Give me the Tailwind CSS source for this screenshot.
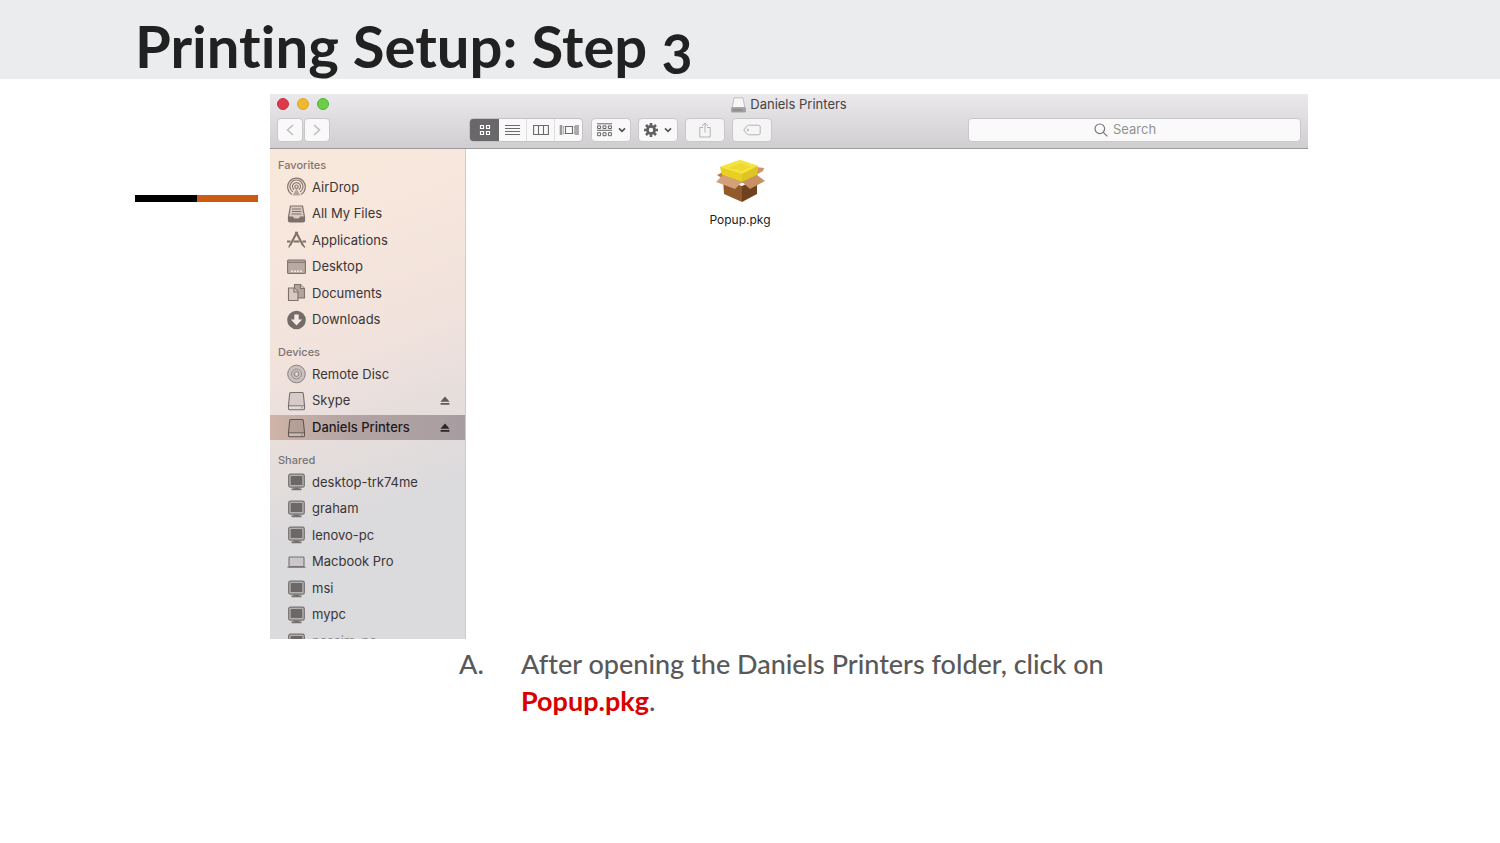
<!DOCTYPE html>
<html lang="en">
<head>
  <meta charset="UTF-8" />
  <meta name="viewport" content="width=device-width, initial-scale=1.0"/>
  <title>Printing Setup: Step 3</title>
  <script src="https://cdn.jsdelivr.net/npm/@tailwindcss/browser@4"></script>
</head>
<body class="bg-white font-[Lato,sans-serif] min-h-screen">
  <!-- Shared icons -->
  <svg class="hidden">
    <symbol id="pc" viewBox="0 0 18 18">
      <rect x="1.2" y="1.2" width="15.6" height="13" rx="1.8" fill="#b5b2b2" stroke="#747070" stroke-width="1.2"/>
      <rect x="3.2" y="3" width="11.6" height="9" fill="#6c6868"/>
      <path d="M6.5 14.500h5l.5 1h2v1.700H4v-1.700h2z" fill="#747070"/>
    </symbol>
    <symbol id="drive" viewBox="0 0 18 20">
      <path d="M3.4 1.500h11.200q1 0 1.200 1l1.200 11.500v3.500q0 1.300-1.300 1.300H2.300Q1 18.800 1 17.500V14L2.200 2.500q.2-1 1.200-1z" fill="#000" fill-opacity=".09" stroke="#000" stroke-opacity=".48" stroke-width="1.100"/>
      <path d="M1.500 15.500h15v2.200h-15z" fill="#fff" fill-opacity=".35"/>
      <path d="M1.300 14.800h15.400" stroke="#000" stroke-opacity=".4"/>
      <path d="M13.500 16.800h1.500" stroke="#000" stroke-opacity=".4"/>
    </symbol>
    <symbol id="eject" viewBox="0 0 10 10">
      <path d="M5 .5l4.600 5.300H.4zM.6 7h8.800v1.800H.6z" fill="currentColor"/>
    </symbol>
    <symbol id="down" viewBox="0 0 8 6">
      <path d="M1 1.300l3 3 3-3" fill="none" stroke="#555" stroke-width="1.700"/>
    </symbol>
  </svg>

  <header class="bg-[#ebeced] h-[79px] px-[9%] flex items-center">
    <h1 class="text-[58px] leading-[60px] font-bold [font-variant-ligatures:none] oldstyle-nums text-[#212121] pt-3">Printing Setup: Step 3</h1>
  </header>

  <main class="pl-[9%] pr-[12.8%] pt-[15px]">
    <div class="flex gap-3">
      <!-- Accent bar -->
      <div class="w-[123px] h-[7px] mt-[101px] flex shrink-0">
        <div class="flex-1 bg-black"></div>
        <div class="flex-1 bg-[#cc5a12]"></div>
      </div>

      <!-- Finder window -->
      <section class="flex-1 min-w-0 font-[Inter,sans-serif] text-[13px] text-[#3a3536]">
        <div class="bg-linear-to-b from-[#ebe9eb] to-[#d0ced0] border-b border-[#9b999b] px-[7px] pb-[6px]">
          <div class="h-[22px] grid grid-cols-3 items-center">
            <div class="flex gap-2 pb-[2px]">
              <button aria-label="Close" class="size-3 rounded-full bg-[#dc3a49] border border-[#c43542]"></button>
              <button aria-label="Minimize" class="size-3 rounded-full bg-[#ecb92f] border border-[#dba72e]"></button>
              <button aria-label="Zoom" class="size-3 rounded-full bg-[#6bcf46] border border-[#51b33c]"></button>
            </div>
            <div class="flex justify-center items-center gap-1 text-[#454346]">
              <svg class="w-[15px] h-4" viewBox="0 0 15 16">
                <path d="M3 .8h9l1.800 10H1.200z" fill="#f7f7f7" stroke="#b5b3b5" stroke-width=".8"/>
                <path d="M.7 10.800h13.600v4.200H.7z" fill="#a7a7a7" stroke="#8c8c8c" stroke-width=".7"/>
                <path d="M2 13h9.500" stroke="#777"/>
              </svg>
              <h2 class="whitespace-nowrap">Daniels Printers</h2>
            </div>
          </div>

          <div class="flex items-center h-6 mt-[2px]">
            <div class="flex gap-px">
              <button aria-label="Back" class="w-[26px] h-6 rounded bg-[#f9f9f9] border border-[#c9c7c9] flex items-center justify-center">
                <svg class="w-2 h-3" viewBox="0 0 8 12"><path d="M7 1L1.500 6 7 11" fill="none" stroke="#bdbdbd" stroke-width="1.500"/></svg>
              </button>
              <button aria-label="Forward" class="w-[26px] h-6 rounded bg-[#f9f9f9] border border-[#c9c7c9] flex items-center justify-center">
                <svg class="w-2 h-3" viewBox="0 0 8 12"><path d="M1 1l5.500 5L1 11" fill="none" stroke="#bdbdbd" stroke-width="1.500"/></svg>
              </button>
            </div>

            <div class="ml-[139px] w-[114px] h-6 rounded bg-[#f9f9f9] border border-[#c3c1c3] flex overflow-hidden">
              <button aria-label="Icon view" class="w-[29px] bg-[#68676a] flex items-center justify-center">
                <svg class="w-3 h-3" viewBox="0 0 12 12" fill="none" stroke="#fff" stroke-width="1.200"><path d="M1.500 1.500h3v3h-3zM7.500 1.500h3v3h-3zM1.500 7.500h3v3h-3zM7.500 7.500h3v3h-3z"/></svg>
              </button>
              <button aria-label="List view" class="flex-1 flex items-center justify-center">
                <svg class="w-[15px] h-3" viewBox="0 0 15 12" stroke="#6b6b6b" stroke-width="1.100"><path d="M0 1.500h15M0 4.500h15M0 7.500h15M0 10.500h15"/></svg>
              </button>
              <button aria-label="Column view" class="flex-1 flex items-center justify-center border-l border-[#dedede]">
                <svg class="w-4 h-3" viewBox="0 0 16 12" fill="none" stroke="#6b6b6b" stroke-width="1.100"><path d="M.6 1.500h14.800v9H.6zM5.500 1.500v9M10.500 1.500v9"/></svg>
              </button>
              <button aria-label="Cover flow view" class="flex-1 flex items-center justify-center border-l border-[#dedede]">
                <svg class="w-5 h-3" viewBox="0 0 20 12" fill="none" stroke="#6b6b6b" stroke-width="1.100"><path d="M6.500 2.500h7v7h-7zM4.500 2v1.500M4.500 8.500V10M15.500 2v1.500M15.500 8.500V10M17 1v10M19 1v10"/><path d="M2 1v10" stroke="#999" stroke-width="2.600"/><path d="M4.500 2v8M15.500 2v8" stroke="#aaa" stroke-width=".8"/></svg>
              </button>
            </div>

            <div class="flex gap-[7px] ml-2">
              <button aria-label="Arrange" class="w-10 h-6 rounded bg-[#f9f9f9] border border-[#c9c7c9] flex items-center justify-center gap-[6px]">
                <svg class="w-[15px] h-[14px]" viewBox="0 0 15 14" fill="none" stroke="#666"><path d="M0 .8h15M0 7.300h15M.6 2.900h3v2.600h-3zM6 2.900h3v2.600H6zM11.400 2.900h3v2.600h-3zM.6 9.700h3v3h-3zM6 9.700h3v3H6zM11.400 9.700h3v3h-3z"/></svg>
                <svg class="w-2 h-[6px]"><use href="#down"/></svg>
              </button>
              <button aria-label="Action" class="w-10 h-6 rounded bg-[#f9f9f9] border border-[#c9c7c9] flex items-center justify-center gap-[6px]">
                <svg class="w-[14px] h-[14px]" viewBox="0 0 14 14" fill="none" stroke="#5f5f5f"><circle cx="7" cy="7" r="3.600" stroke-width="2.800"/><path d="M7 0v2.500M7 11.500V14M0 7h2.500M11.500 7H14M2 2l1.900 1.900M10.100 10.100L12 12M12 2l-1.900 1.900M3.900 10.100L2 12" stroke-width="2.600"/></svg>
                <svg class="w-2 h-[6px]"><use href="#down"/></svg>
              </button>
              <button aria-label="Share" class="w-10 h-6 rounded bg-[#f6f5f6] border border-[#c9c7c9] flex items-center justify-center">
                <svg class="w-3 h-4" viewBox="0 0 12 16" fill="none" stroke="#b3b3b3"><path d="M4 5.500H.8v9.500h10.400V5.500H8M6 10.500V1M3 4l3-3 3 3"/></svg>
              </button>
              <button aria-label="Edit tags" class="w-10 h-6 rounded bg-[#f6f5f6] border border-[#c9c7c9] flex items-center justify-center">
                <svg class="w-[18px] h-3" viewBox="0 0 18 12" fill="none" stroke="#b3b3b3"><path d="M5.500 1.200h10q1.700 0 1.700 1.700v6.200q0 1.700-1.700 1.700h-10Q3.500 10.500.8 6 3.500 1.500 5.500 1.200z"/><circle cx="4.800" cy="6" r=".8"/></svg>
              </button>
            </div>

            <label class="ml-auto w-[333px] h-6 rounded bg-[#fafafa] border border-[#c9c7c9] pr-4 flex items-center justify-center gap-[5px]">
              <svg class="size-[14px]" viewBox="0 0 14 14" fill="none" stroke="#777" stroke-width="1.200"><circle cx="5.800" cy="5.800" r="4.800"/><path d="M9.300 9.300l4 4"/></svg>
              <input type="text" aria-label="Search" placeholder="Search" class="w-[46px] outline-none placeholder:text-[#929292]" />
            </label>
          </div>
        </div>

        <div class="flex h-[490px] overflow-hidden">
          <!-- Sidebar -->
          <nav class="w-[196px] shrink-0 border-r border-[#d0cacb] bg-linear-[160deg] from-[#f8e8dc] from-10% via-[#f1e2dc] via-40% to-[#dbdadc] to-72% pt-[7px]">
            <h3 class="h-[18px] leading-[18px] pl-2 text-[11px] font-medium text-[#82746f]">Favorites</h3>
            <ul class="h-[159px] flex flex-col">
              <li class="flex-1 flex items-center">
                <a href="#" class="w-full pl-[17px] flex items-center gap-[6px]">
                  <svg class="w-[19px] h-5" viewBox="0 0 19 20" fill="none" stroke="#85766f" stroke-width="1.200"><path d="M5 17.500a8.800 8.800 0 1 1 9 0M6 15a6.500 6.500 0 1 1 7 0M7.200 12.800a4 4 0 1 1 4.600 0"/><circle cx="9.500" cy="9.700" r="1.700"/><path d="M9.500 11.500l-4 7h8z" fill="#b5a49c" stroke="none"/></svg>
                  AirDrop
                </a>
              </li>
              <li class="flex-1 flex items-center">
                <a href="#" class="w-full pl-[17px] flex items-center gap-[6px]">
                  <svg class="w-[19px] h-5" viewBox="0 0 19 20"><path d="M3.500 2h12l2 11v3.500q0 1.500-1.500 1.500H3q-1.500 0-1.500-1.500V13z" fill="#d9cac2" stroke="#7e706a" stroke-width="1.200"/><path d="M5 5h9M5 7.500h9.500M4.500 10h10" stroke="#7e706a"/><path d="M1.500 12.500H6q.5 2 2 2h3q1.500 0 2-2h4.500V17q0 1-1 1h-14q-1 0-1-1z" fill="#7e706a"/></svg>
                  All My Files
                </a>
              </li>
              <li class="flex-1 flex items-center">
                <a href="#" class="w-full pl-[17px] flex items-center gap-[6px]">
                  <svg class="w-[19px] h-5" viewBox="0 0 19 20" fill="none" stroke="#7e706a"><path d="M9.500 3L3 15.500M9.500 3l6.500 12.500" stroke-width="2"/><path d="M8 2.500h3M2.800 15l-1 2.500M16 15l1.800 2.500" stroke-width="1.300"/><path d="M0 11.500h3.500M6.500 11.500h6M15.500 11.500H19" stroke-width="2.200"/></svg>
                  Applications
                </a>
              </li>
              <li class="flex-1 flex items-center">
                <a href="#" class="w-full pl-[17px] flex items-center gap-[6px]">
                  <svg class="w-[19px] h-5" viewBox="0 0 19 20"><rect x=".6" y="3" width="17.800" height="13.500" rx="1" fill="#b9aaa3" stroke="#7e706a" stroke-width="1.100"/><path d="M1 5.300h17" stroke="#7e706a"/><path d="M4 14.200h11" stroke="#f3e8e2" stroke-width="1.600" stroke-dasharray="2 1"/></svg>
                  Desktop
                </a>
              </li>
              <li class="flex-1 flex items-center">
                <a href="#" class="w-full pl-[17px] flex items-center gap-[6px]">
                  <svg class="w-[19px] h-5" viewBox="0 0 19 20" fill="#d8cac3" stroke="#7e706a" stroke-width="1.100"><path d="M7.500 1.500h6l4 4v9.500h-10z" fill="#b3a49d"/><path d="M13.500 1.500v4h4"/><path d="M1.500 5h6l3.500 3.500v9H1.500z"/><path d="M7 5v4h4"/></svg>
                  Documents
                </a>
              </li>
              <li class="flex-1 flex items-center">
                <a href="#" class="w-full pl-[17px] flex items-center gap-[6px]">
                  <svg class="w-[19px] h-5" viewBox="0 0 19 20"><circle cx="9.500" cy="10" r="9.300" fill="#776b67"/><path d="M7.300 4.500h4.400v5h3.500L9.500 15.500 3.800 9.500h3.500z" fill="#f4e9e4"/></svg>
                  Downloads
                </a>
              </li>
            </ul>

            <h3 class="h-[18px] leading-[18px] mt-[10px] pl-2 text-[11px] font-medium text-[#7b7371]">Devices</h3>
            <ul class="h-20 flex flex-col">
              <li class="flex-1 flex items-center">
                <a href="#" class="w-full pl-[17px] flex items-center gap-[6px]">
                  <svg class="w-[19px] h-5" viewBox="0 0 19 20" fill="#cbc1be" stroke="#8b807d"><circle cx="9.500" cy="10" r="8.800"/><circle cx="9.500" cy="10" r="5" stroke-width=".8"/><circle cx="9.500" cy="10" r="2.500" stroke-width=".9"/><circle cx="9.500" cy="10" r=".8" fill="#fff" stroke="none"/></svg>
                  Remote Disc
                </a>
              </li>
              <li class="flex-1 flex items-center">
                <a href="#" class="w-full pl-[17px] pr-[15px] flex items-center gap-[6px]">
                  <svg class="w-[19px] h-5"><use href="#drive"/></svg>
                  Skype
                  <svg class="size-[10px] ml-auto text-[#5f5a5b]"><use href="#eject"/></svg>
                </a>
              </li>
              <li class="flex-1 flex items-center font-medium text-[#1f1a1b]">
                <a href="#" class="w-full h-[25px] pl-[17px] pr-[15px] flex items-center gap-[6px] bg-linear-to-r from-[#d0b4a6] via-[#b3a4a4] via-40% to-[#a79da0]">
                  <svg class="w-[19px] h-5"><use href="#drive"/></svg>
                  Daniels Printers
                  <svg class="size-[10px] ml-auto text-[#2c2627]"><use href="#eject"/></svg>
                </a>
              </li>
            </ul>

            <h3 class="h-[18px] leading-[18px] mt-[10px] pl-2 text-[11px] font-medium text-[#777374]">Shared</h3>
            <ul class="h-[186px] flex flex-col">
              <li class="flex-1 flex items-center">
                <a href="#" class="w-full pl-[17px] flex items-center gap-[6px]"><svg class="w-[19px] h-[18px]"><use href="#pc"/></svg>desktop-trk74me</a>
              </li>
              <li class="flex-1 flex items-center">
                <a href="#" class="w-full pl-[17px] flex items-center gap-[6px]"><svg class="w-[19px] h-[18px]"><use href="#pc"/></svg>graham</a>
              </li>
              <li class="flex-1 flex items-center">
                <a href="#" class="w-full pl-[17px] flex items-center gap-[6px]"><svg class="w-[19px] h-[18px]"><use href="#pc"/></svg>lenovo-pc</a>
              </li>
              <li class="flex-1 flex items-center">
                <a href="#" class="w-full pl-[17px] flex items-center gap-[6px]">
                  <svg class="w-[19px] h-[18px]" viewBox="0 0 19 18"><rect x="2" y="4" width="15" height="9.500" rx=".8" fill="#c9c7c8" stroke="#777374" stroke-width="1.100"/><path d="M.5 13.500h18v1.300H.5z" fill="#777374"/></svg>
                  Macbook Pro
                </a>
              </li>
              <li class="flex-1 flex items-center">
                <a href="#" class="w-full pl-[17px] flex items-center gap-[6px]"><svg class="w-[19px] h-[18px]"><use href="#pc"/></svg>msi</a>
              </li>
              <li class="flex-1 flex items-center">
                <a href="#" class="w-full pl-[17px] flex items-center gap-[6px]"><svg class="w-[19px] h-[18px]"><use href="#pc"/></svg>mypc</a>
              </li>
              <li class="flex-1 flex items-center">
                <a href="#" class="w-full pl-[17px] flex items-center gap-[6px] text-[#8d8b8d]"><svg class="w-[19px] h-[18px]"><use href="#pc"/></svg>nassim-pc</a>
              </li>
            </ul>
          </nav>

          <!-- Files -->
          <div class="flex-1 bg-white pt-[9px] pl-[234px]">
            <button class="w-20 flex flex-col items-center gap-[6px] text-xs leading-5 text-[#222]">
              <svg class="w-[50px] h-[46px]" viewBox="0 0 50 46">
                <path d="M8 22l19 6v16L9 36z" fill="#925a2b"/>
                <path d="M27 28l15-7v15L27 44z" fill="#70411d"/>
                <path d="M8 17L27 9l16 8-16 8z" fill="#a97a3c"/>
                <path d="M41 9l8 1-1 3-7 4z" fill="#cd9268"/>
                <path d="M8 14l-6 3 6 4 4-3z" fill="#b87b4e"/>
                <path d="M5 9L25 2l18 6-1 9-15 7L7 17z" fill="#e8cf22"/>
                <path d="M5 9L25 2l18 6-16 8z" fill="#f5e440"/>
                <path d="M13 10l13-5 10 4-9 4z" fill="#edd932"/>
                <path d="M27 16l16-8-1 9-15 7z" fill="#dfc523"/>
                <path d="M8 17l19 7-7 7L1 24z" fill="#d3a078"/>
                <path d="M27 24l15-7 8 6-15 8z" fill="#c98f65"/>
              </svg>
              Popup.pkg
            </button>
          </div>
        </div>
      </section>
    </div>
  </main>

  <!-- Instructions -->
  <ol class="pl-[459px] pr-[380px] mt-[6px] text-[27px] leading-[37px] font-medium [font-variant-ligatures:none] text-[#595959]">
    <li class="flex">
      <span class="w-[62px] shrink-0">A.</span>
      <p>After opening the Daniels Printers folder, click on <strong class="font-bold text-[#d90000]">Popup.pkg</strong>.</p>
    </li>
  </ol>
</body>
</html>
